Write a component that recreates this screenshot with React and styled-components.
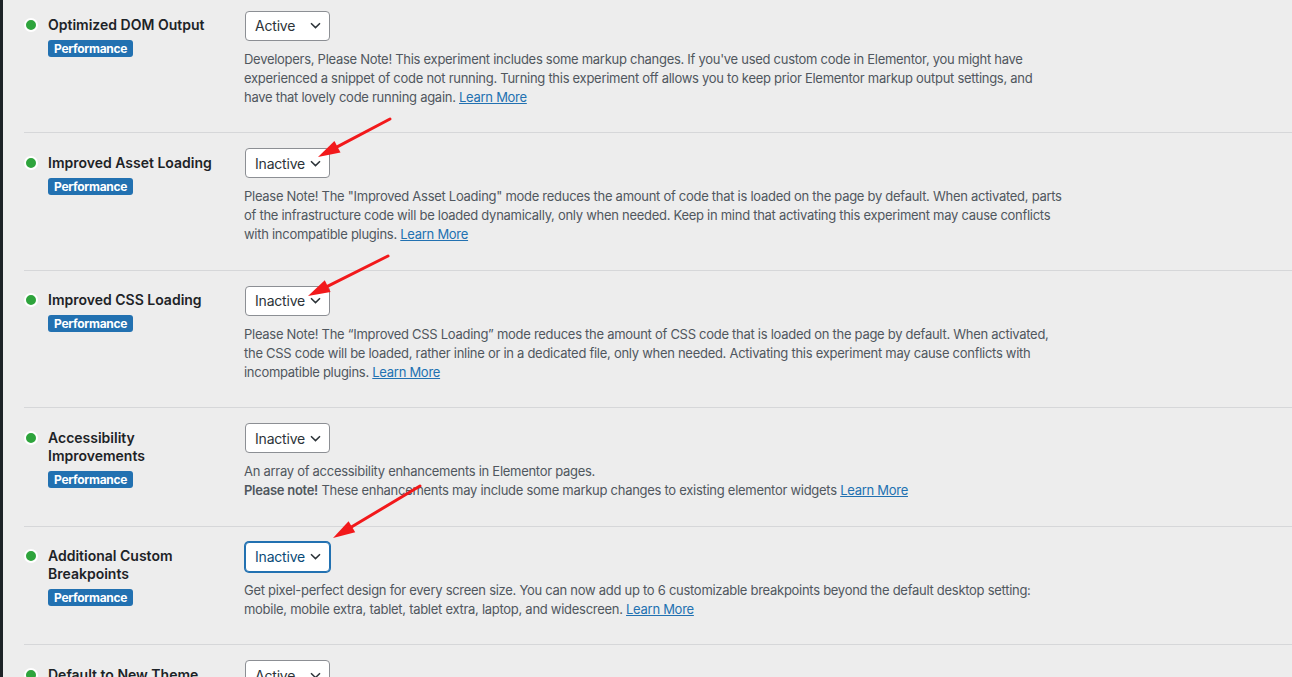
import React from "react";
import styled, { createGlobalStyle } from "styled-components";

const GlobalStyle = createGlobalStyle`
  html, body {
    margin: 0;
    padding: 0;
    background: #ededed;
    overflow: hidden;
  }
  body {
    font-family: Inter, "Noto Sans", "Liberation Sans", sans-serif;
    -webkit-font-smoothing: antialiased;
  }
`;

const experiments = [
  {
    title: "Optimized DOM Output",
    state: "Active",
    text: "Developers, Please Note! This experiment includes some markup changes. If you've used custom code in Elementor, you might have experienced a snippet of code not running. Turning this experiment off allows you to keep prior Elementor markup output settings, and have\u00a0that lovely code running again.",
  },
  {
    title: "Improved Asset Loading",
    state: "Inactive",
    text: 'Please Note! The "Improved Asset Loading" mode reduces the amount of code that is loaded on the page by default. When activated, parts of the infrastructure code will be loaded dynamically, only when needed. Keep in mind that activating this experiment may cause conflicts with incompatible plugins.',
  },
  {
    title: "Improved CSS Loading",
    state: "Inactive",
    text: "Please Note! The \u201cImproved CSS Loading\u201d mode reduces the amount of CSS code that is loaded on the page by default. When activated, the CSS code will be loaded, rather inline or in a dedicated file, only when needed. Activating this experiment may cause conflicts with incompatible plugins.",
  },
  {
    title: "Accessibility Improvements",
    state: "Inactive",
    accessibility: true,
  },
  {
    title: "Additional Custom Breakpoints",
    state: "Inactive",
    focused: true,
    text: "Get pixel-perfect design for every screen size. You can now add up to 6 customizable breakpoints beyond the default desktop setting: mobile, mobile extra, tablet, tablet extra, laptop, and widescreen.",
  },
  {
    title: "Default to New Theme",
    state: "Active",
    text: "",
  },
];

const arrows = [
  { from: [390, 119], to: [318, 157] },
  { from: [388, 256], to: [308, 296] },
  { from: [420, 486], to: [333, 538] },
];

function Arrow({ from, to }) {
  const dx = to[0] - from[0];
  const dy = to[1] - from[1];
  const len = Math.hypot(dx, dy);
  const ux = dx / len;
  const uy = dy / len;
  const head = 22;
  const half = 6.5;
  const bx = to[0] - ux * head;
  const by = to[1] - uy * head;
  const nx = -uy;
  const ny = ux;
  const pts = [
    `${to[0]},${to[1]}`,
    `${bx + nx * half},${by + ny * half}`,
    `${bx - nx * half},${by - ny * half}`,
  ].join(" ");
  return (
    <g>
      <line
        x1={from[0]}
        y1={from[1]}
        x2={bx + ux * 2}
        y2={by + uy * 2}
        stroke="#f2191b"
        strokeWidth="3"
        strokeLinecap="round"
      />
      <polygon points={pts} fill="#f2191b" />
    </g>
  );
}

function Chevron() {
  return (
    <svg width="11" height="7" viewBox="0 0 11 7">
      <path
        d="M1 1.2 L5.5 5.6 L10 1.2"
        fill="none"
        stroke="#2c3338"
        strokeWidth="1.5"
      />
    </svg>
  );
}

function Description({ item }) {
  if (item.accessibility) {
    return (
      <Desc>
        An array of accessibility enhancements in Elementor pages.
        <br />
        <strong>Please note!</strong> These enhancements may include some markup
        changes to existing elementor widgets <Link href="#">Learn More</Link>
      </Desc>
    );
  }
  if (!item.text) return null;
  return (
    <Desc>
      {item.text} <Link href="#">Learn More</Link>
    </Desc>
  );
}

export default function App() {
  return (
    <Page>
      <GlobalStyle />
      <SideEdge />
      <Content>
        <List>
          {experiments.map((item) => (
            <Row key={item.title}>
              <Label>
                <Dot />
                <LabelText>
                  <Title>{item.title}</Title>
                  <Badge>Performance</Badge>
                </LabelText>
              </Label>
              <Field>
                <Select $focused={item.focused}>
                  <span>{item.state}</span>
                  <Chevron />
                </Select>
                <Description item={item} />
              </Field>
            </Row>
          ))}
        </List>
      </Content>
      <Annotations width="1292" height="677" viewBox="0 0 1292 677">
        {arrows.map((a, i) => (
          <Arrow key={i} from={a.from} to={a.to} />
        ))}
      </Annotations>
    </Page>
  );
}

const Page = styled.div`
  position: relative;
  display: flex;
  width: 1292px;
  height: 677px;
  overflow: hidden;
  background: #ededed;
`;

const SideEdge = styled.div`
  width: 3px;
  flex-shrink: 0;
  background: #1d2327;
`;

const Content = styled.div`
  flex: 1;
  padding-left: 21px;
`;

const List = styled.div`
  margin-top: -4.5px;
  width: 1268px;
`;

const Row = styled.div`
  display: grid;
  grid-template-columns: 221px 1fr;
  padding: 15px 0 25.5px;
  border-bottom: 1px solid #d6d7d9;
`;

const Label = styled.div`
  display: flex;
  align-items: flex-start;
  gap: 10px;
  padding-top: 5.5px;
`;

const Dot = styled.span`
  width: 10px;
  height: 10px;
  margin-top: 2px;
  flex-shrink: 0;
  border-radius: 50%;
  background: #2ea43c;
  border: 2px solid #fff;
`;

const LabelText = styled.div`
  display: flex;
  flex-direction: column;
  align-items: flex-start;
`;

const Title = styled.div`
  font-size: 14px;
  line-height: 18px;
  font-weight: 600;
  color: #1d2327;
  max-width: 170px;
`;

const Badge = styled.span`
  margin-top: 6px;
  height: 17px;
  padding: 0 6px;
  border-radius: 3px;
  background: #2271b1;
  color: #fff;
  font-size: 12px;
  font-weight: 700;
  line-height: 17px;
  letter-spacing: -0.3px;
`;

const Field = styled.div`
  display: flex;
  flex-direction: column;
  align-items: flex-start;
`;

const Select = styled.div`
  box-sizing: border-box;
  width: 85px;
  height: 30px;
  display: flex;
  align-items: center;
  justify-content: space-between;
  padding: 0 8px 0 9px;
  background: #fff;
  border: 1px solid ${(p) => (p.$focused ? "#2271b1" : "#8c8f94")};
  box-shadow: ${(p) => (p.$focused ? "0 0 0 1px #2271b1" : "none")};
  border-radius: 4px;
  font-size: 14px;
  letter-spacing: -0.2px;
  color: ${(p) => (p.$focused ? "#0a4b78" : "#2c3338")};
`;

const Desc = styled.p`
  margin: 9px 0 0 -1px;
  max-width: 826px;
  font-size: 13px;
  line-height: 19px;
  letter-spacing: -0.28px;
  color: #50575e;

  strong {
    font-weight: 600;
    color: #50575e;
  }
`;

const Link = styled.a`
  color: #2271b1;
  text-decoration: underline;
`;

const Annotations = styled.svg`
  position: absolute;
  top: 0;
  left: 0;
  pointer-events: none;
`;
